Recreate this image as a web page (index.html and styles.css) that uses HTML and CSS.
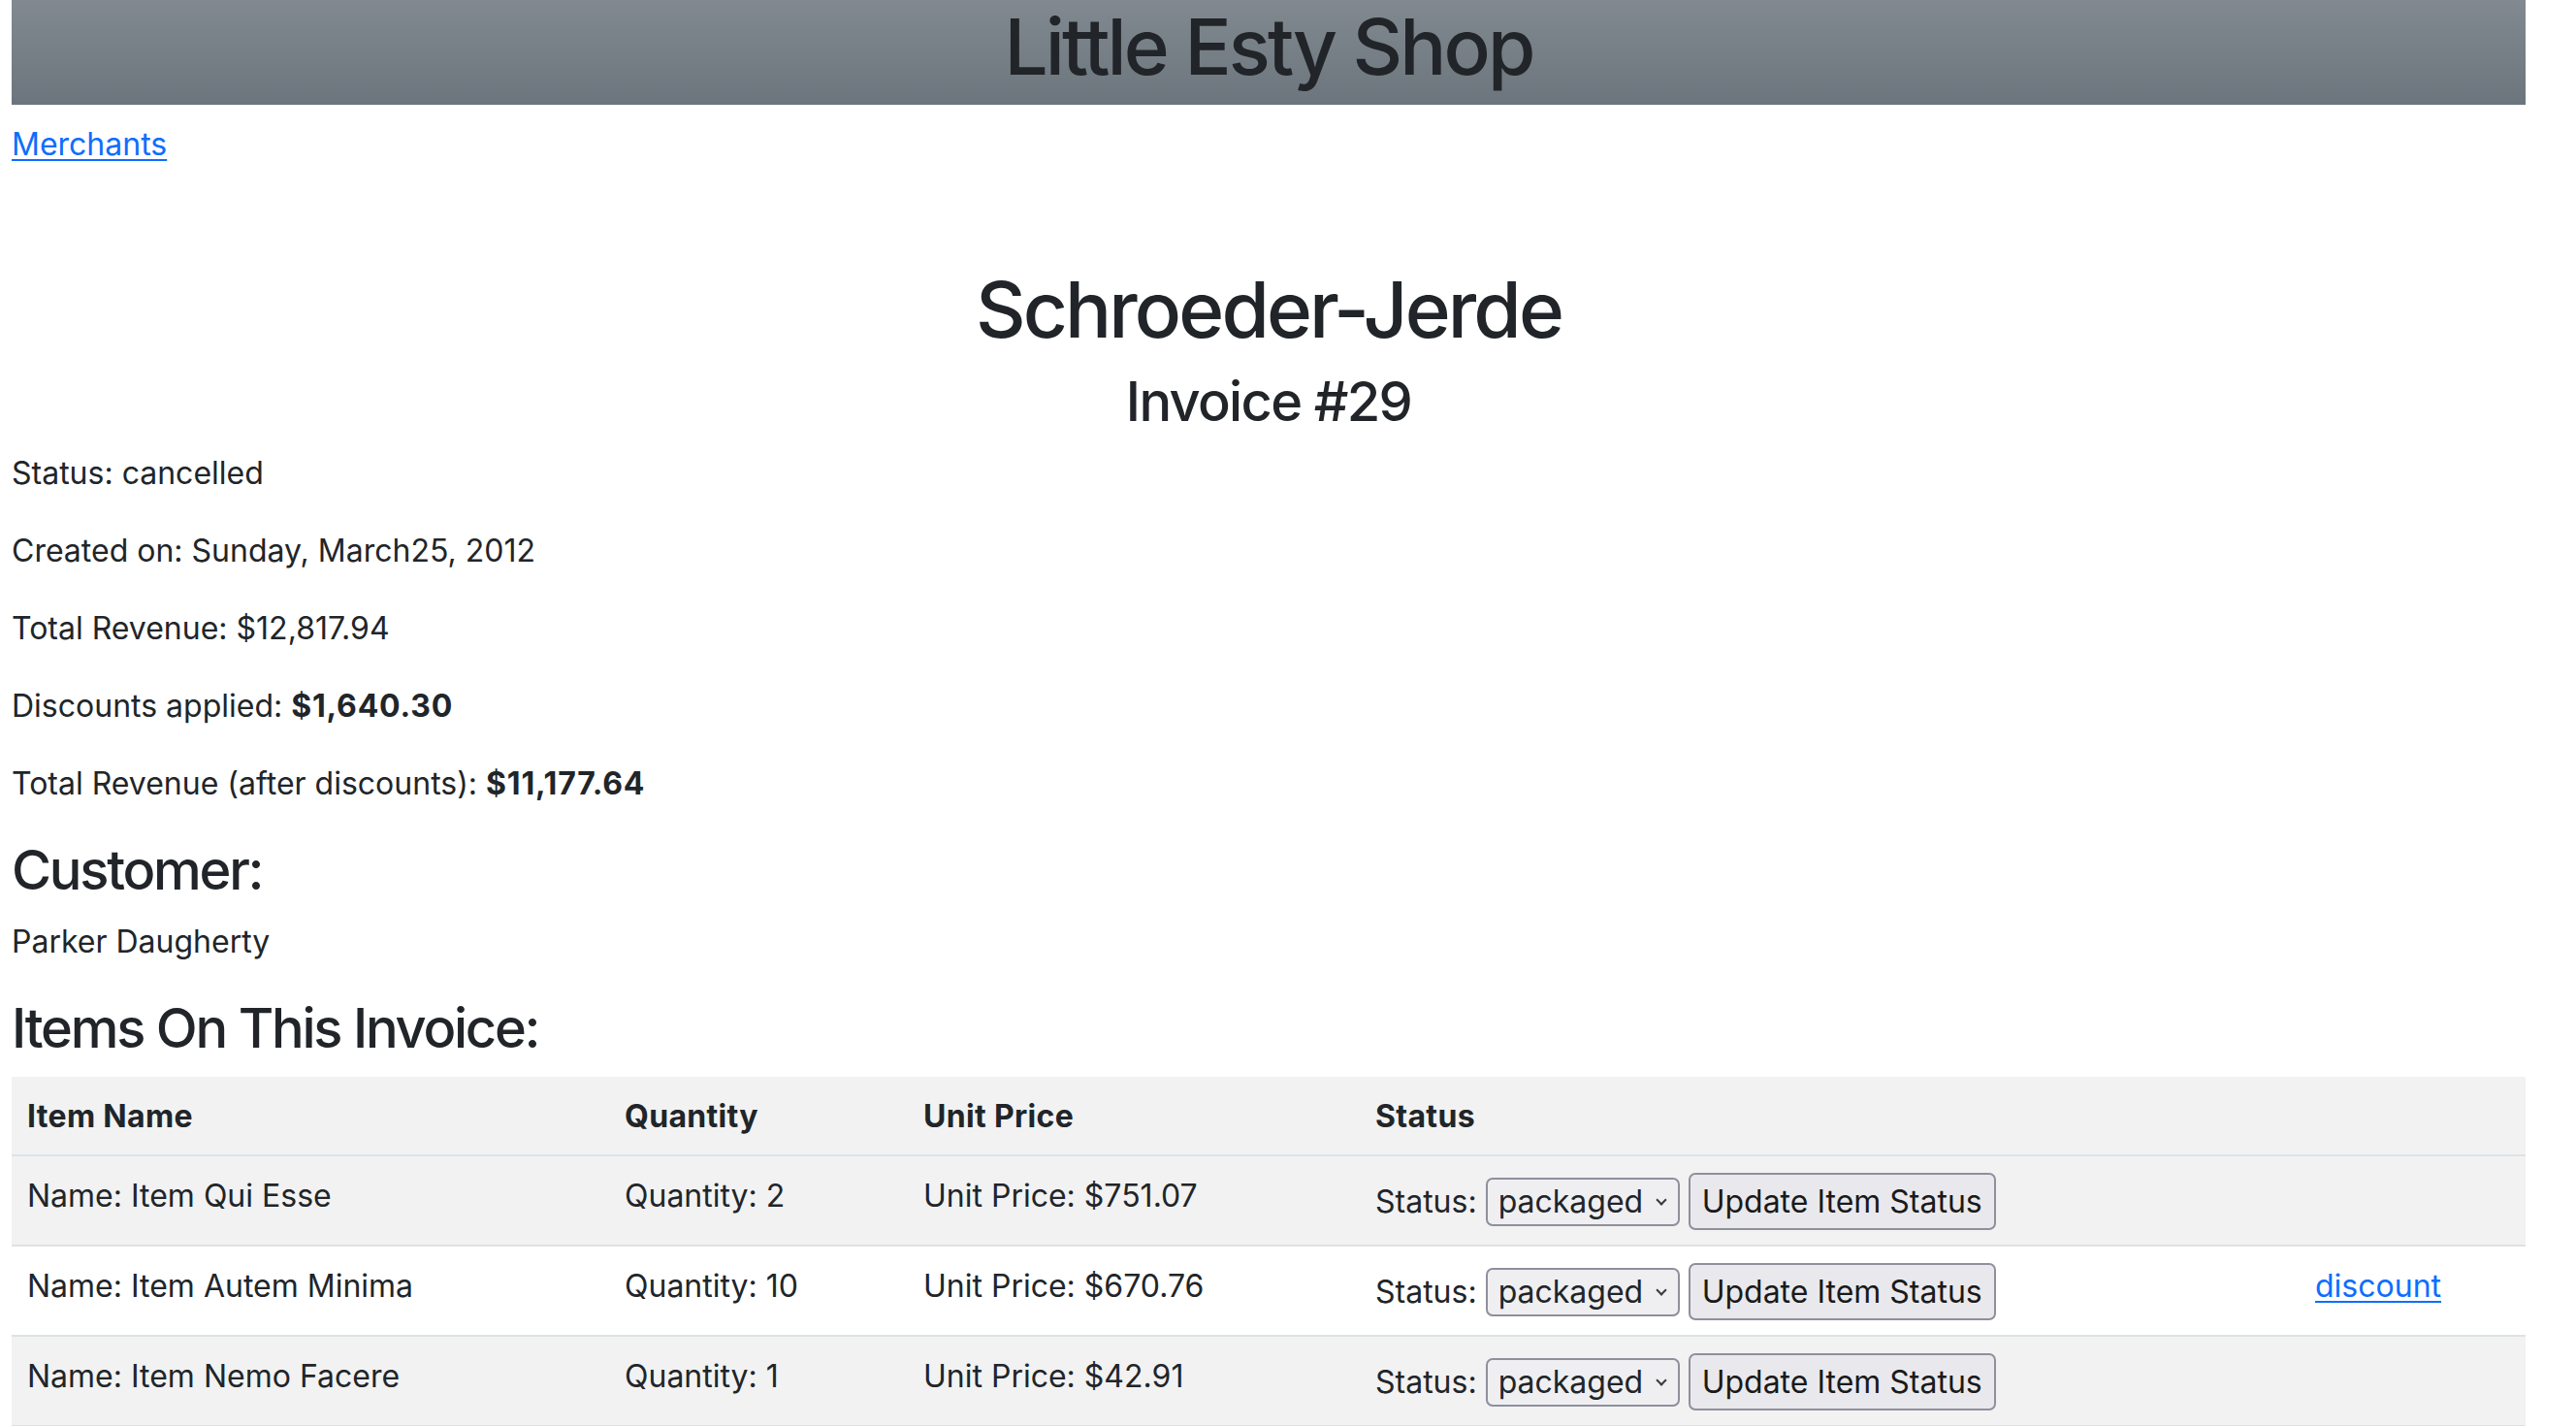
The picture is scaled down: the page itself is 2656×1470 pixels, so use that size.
FILE: index.html
```html
<!DOCTYPE html>
<html lang="en">
<head>
<meta charset="utf-8">
<title>Little Esty Shop</title>
<link rel="stylesheet" href="styles.css">
</head>
<body>
<div class="page">
  <header class="topbar">
    <h1 class="brand">Little Esty Shop</h1>
  </header>
  <nav class="nav"><a href="#">Merchants</a></nav>

  <section class="invoice-head">
    <h1 class="merchant">Schroeder-Jerde</h1>
    <h3 class="invoice-no">Invoice #29</h3>
  </section>

  <section class="details">
    <p>Status: cancelled</p>
    <p>Created on: Sunday, March25, 2012</p>
    <p>Total Revenue: $12,817.94</p>
    <p>Discounts applied: <strong>$1,640.30</strong></p>
    <p>Total Revenue (after discounts): <strong>$11,177.64</strong></p>
  </section>

  <h3 class="section-title">Customer:</h3>
  <p>Parker Daugherty</p>

  <h3 class="section-title">Items On This Invoice:</h3>
  <table class="items">
    <colgroup>
      <col class="c-name">
      <col class="c-qty">
      <col class="c-price">
      <col class="c-status">
      <col class="c-link">
    </colgroup>
    <thead>
      <tr>
        <th>Item Name</th>
        <th>Quantity</th>
        <th>Unit Price</th>
        <th>Status</th>
        <th></th>
      </tr>
    </thead>
    <tbody>
      <tr>
        <td>Name: Item Qui Esse</td>
        <td>Quantity: 2</td>
        <td>Unit Price: $751.07</td>
        <td>Status: <span class="select-wrap"><select class="status-select"><option>packaged</option><option>pending</option><option>shipped</option></select></span> <button class="update-btn" type="button">Update Item Status</button></td>
        <td></td>
      </tr>
      <tr>
        <td>Name: Item Autem Minima</td>
        <td>Quantity: 10</td>
        <td>Unit Price: $670.76</td>
        <td>Status: <span class="select-wrap"><select class="status-select"><option>packaged</option><option>pending</option><option>shipped</option></select></span> <button class="update-btn" type="button">Update Item Status</button></td>
        <td><a href="#">discount</a></td>
      </tr>
      <tr>
        <td>Name: Item Nemo Facere</td>
        <td>Quantity: 1</td>
        <td>Unit Price: $42.91</td>
        <td>Status: <span class="select-wrap"><select class="status-select"><option>packaged</option><option>pending</option><option>shipped</option></select></span> <button class="update-btn" type="button">Update Item Status</button></td>
        <td></td>
      </tr>
    </tbody>
  </table>
</div>
</body>
</html>
```
FILE: styles.css
```css
* { box-sizing: border-box; }

body {
  margin: 0;
  font-family: Inter, "Noto Sans", "Liberation Sans", sans-serif;
  font-size: 32px;
  line-height: 48px;
  color: #212529;
  background: #fff;
}

.page {
  padding: 0 52px 40px 12px;
}

a {
  color: #0d6efd;
  text-decoration: underline;
  text-underline-offset: 4px;
  text-decoration-thickness: 2px;
}

.topbar {
  height: 108px;
  background-color: #6c757d;
  background-image: linear-gradient(180deg, rgba(255,255,255,0.15), rgba(255,255,255,0));
  text-align: center;
}

.brand {
  margin: 0;
  font-size: 80px;
  line-height: 96px;
  font-weight: 500;
  letter-spacing: -0.036em;
}

.nav {
  margin-top: 17px;
}

.invoice-head {
  text-align: center;
  margin-top: 98px;
}

.merchant {
  margin: 0 0 14px;
  font-size: 80px;
  line-height: 96px;
  font-weight: 500;
  letter-spacing: -0.036em;
}

.invoice-no,
.section-title {
  margin: 0 0 16px;
  font-size: 56px;
  line-height: 67px;
  font-weight: 500;
}

.invoice-no {
  letter-spacing: -0.03em;
}

.section-title {
  letter-spacing: -0.04em;
}

p {
  margin: 0 0 32px;
}

strong {
  font-weight: 700;
  letter-spacing: 0.025em;
}

.items {
  width: 100%;
  border-collapse: collapse;
  table-layout: fixed;
}

.c-name { width: 616px; }
.c-qty { width: 308px; }
.c-price { width: 466px; }
.c-status { width: 969px; }
.c-link { width: 233px; }

.items th,
.items td {
  padding: 17px 16px 15px;
  text-align: left;
  vertical-align: top;
  border-bottom: 2px solid #dee2e6;
  white-space: nowrap;
}

.items th {
  font-weight: 700;
  letter-spacing: 0.01em;
}

.items thead tr {
  background: #f2f2f2;
}

.items tbody tr:nth-child(odd) {
  background: #f2f2f2;
}

.select-wrap {
  position: relative;
  display: inline-block;
}

.select-wrap::after {
  content: "";
  position: absolute;
  right: 15px;
  top: 50%;
  width: 6px;
  height: 6px;
  border-right: 2px solid #3a3a3a;
  border-bottom: 2px solid #3a3a3a;
  transform: translateY(-75%) rotate(45deg);
  pointer-events: none;
}

.status-select {
  -webkit-appearance: none;
  appearance: none;
  font-family: inherit;
  font-size: 32px;
  color: #212529;
  width: 200px;
  height: 50px;
  line-height: 46px;
  padding: 0 0 0 11px;
  border: 2px solid #8f8f9d;
  border-radius: 7px;
  background: #efeff2;
  margin: 0;
}

.update-btn {
  font-family: inherit;
  font-size: 32px;
  color: #1a1a1a;
  height: 59px;
  line-height: 55px;
  padding: 0 12px;
  border: 2px solid #8f8f9d;
  border-radius: 7px;
  background: #e9e9ed;
  margin: 0;
}
```
